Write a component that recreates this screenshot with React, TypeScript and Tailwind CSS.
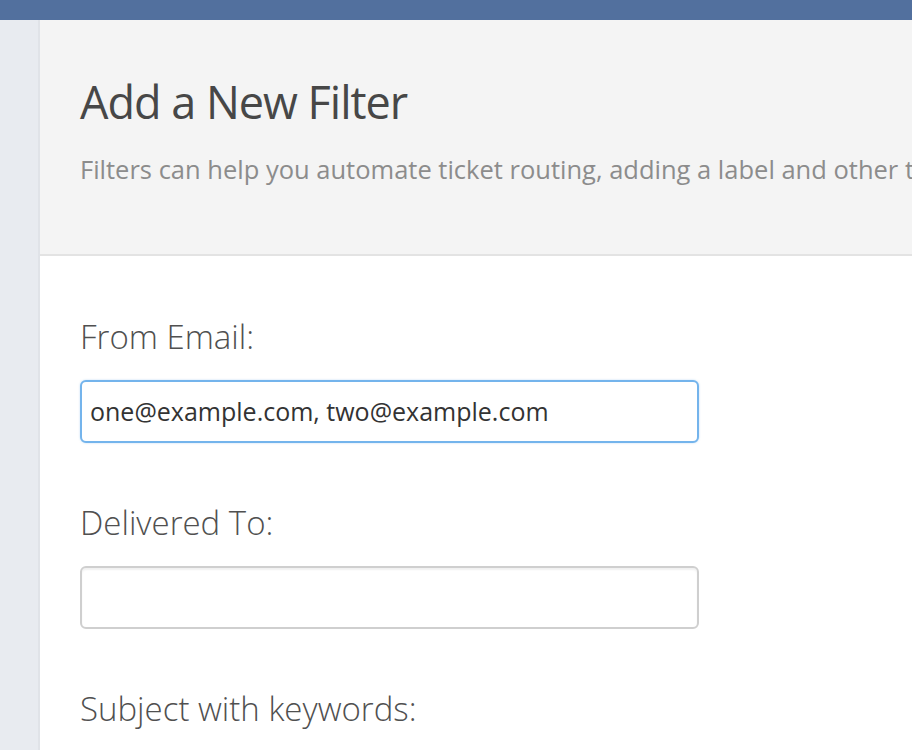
export default function App() {
  return (
    <div
      className="w-[912px] h-[750px] overflow-hidden flex flex-col bg-white"
      style={{ fontFamily: '"Open Sans", "Noto Sans", sans-serif' }}
    >
      <div className="h-[20px] shrink-0 bg-[#52709e]" />
      <div className="flex flex-1 min-h-0">
        <div className="w-[38px] shrink-0 bg-[#e8ebf0] border-r-2 border-[#e0e3e8] box-content" />
        <div className="flex-1 min-w-0 overflow-hidden">
          <div className="h-[236px] bg-[#f4f4f4] border-b-2 border-[#e3e3e3] pl-[40px] pt-[58px]">
            <h1 className="text-[45px] leading-[48px] tracking-[-1px] text-[#474747] font-normal whitespace-nowrap">
              Add a New Filter
            </h1>
            <p className="mt-[29px] text-[25.5px] leading-[28px] text-[#8c8c8c] whitespace-nowrap">
              Filters can help you automate ticket routing, adding a label and other tasks.
            </p>
          </div>
          <div className="pl-[40px] pt-[63px]">
            <label className="block text-[33px] leading-[36px] font-light text-[#505050] whitespace-nowrap">
              From Email:
            </label>
            <div className="mt-[25px] w-[619px] h-[63px] rounded-[6px] border-2 border-[#74b4ec] bg-white flex items-center pl-[8px] shadow-[0_0_2px_rgba(116,180,236,0.5)]">
              <span className="text-[25px] text-[#333333] whitespace-nowrap">
                one@example.com, two@example.com
              </span>
            </div>
            <label className="block mt-[62px] text-[33px] leading-[36px] font-light text-[#505050] whitespace-nowrap">
              Delivered To:
            </label>
            <div className="mt-[25px] w-[619px] h-[63px] rounded-[6px] border-2 border-[#cfcfcf] bg-white shadow-[inset_0_2px_2px_rgba(0,0,0,0.06)]" />
            <label className="block mt-[62px] text-[33px] leading-[36px] font-light text-[#505050] whitespace-nowrap">
              Subject with keywords:
            </label>
          </div>
        </div>
      </div>
    </div>
  );
}
